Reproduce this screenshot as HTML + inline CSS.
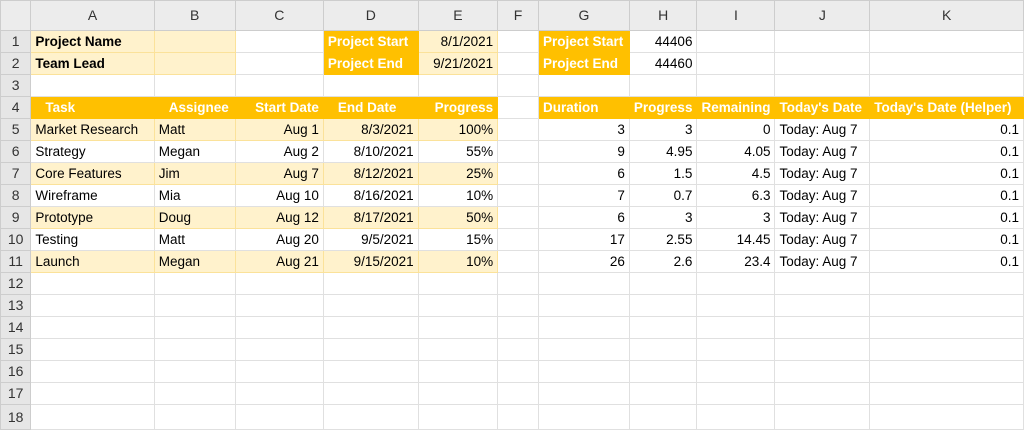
<!DOCTYPE html>
<html><head><meta charset="utf-8"><style>
html,body{margin:0;padding:0;background:#fff;width:1024px;height:430px;overflow:hidden}
table{border-collapse:collapse;table-layout:fixed;font-family:"Liberation Sans",sans-serif;font-size:13.5px;color:#000}
td{height:21px;padding:0 4px;border:1px solid #e0e0e0;white-space:nowrap;overflow:hidden;line-height:21px}
tr.h td{height:29px;background:#ececec;text-align:center;color:#333;font-size:14px;border-color:#cdcdcd}
td.rh{background:#e6e6e6;text-align:center;color:#333;font-size:14px;border-color:#cdcdcd;padding:0}
.y{background:#fff2cc;border-color:#fbe29a}
.o{background:#ffc000;color:#fff;font-weight:bold;border-color:#ffc000}
.b{font-weight:bold}
.r{text-align:right}
tr.last td{height:24px}
</style></head><body>
<table>
<colgroup><col style="width:31px"><col style="width:124px"><col style="width:81px"><col style="width:89px"><col style="width:95px"><col style="width:80px"><col style="width:42px"><col style="width:91px"><col style="width:64px"><col style="width:78px"><col style="width:95px"><col style="width:154px"></colgroup>
<tr class="h"><td></td><td>A</td><td>B</td><td>C</td><td>D</td><td>E</td><td>F</td><td>G</td><td>H</td><td>I</td><td>J</td><td>K</td></tr>
<tr><td class="rh">1</td><td class="y b">Project Name</td><td class="y"></td><td></td><td class="o">Project Start</td><td class="y r">8/1/2021</td><td></td><td class="o">Project Start</td><td class="r">44406</td><td></td><td></td><td></td></tr>
<tr><td class="rh">2</td><td class="y b">Team Lead</td><td class="y"></td><td></td><td class="o">Project End</td><td class="y r">9/21/2021</td><td></td><td class="o">Project End</td><td class="r">44460</td><td></td><td></td><td></td></tr>
<tr><td class="rh">3</td><td></td><td></td><td></td><td></td><td></td><td></td><td></td><td></td><td></td><td></td><td></td></tr>
<tr><td class="rh">4</td><td class="o" style="padding-left:14px">Task</td><td class="o" style="padding-left:14px">Assignee</td><td class="o r">Start Date</td><td class="o" style="padding-left:14px">End Date</td><td class="o r">Progress</td><td></td><td class="o">Duration</td><td class="o r">Progress</td><td class="o r">Remaining</td><td class="o">Today's Date</td><td class="o">Today's Date (Helper)</td></tr>
<tr><td class="rh">5</td><td class="y">Market Research</td><td class="y">Matt</td><td class="y r">Aug 1</td><td class="y r">8/3/2021</td><td class="y r">100%</td><td></td><td class="r">3</td><td class="r">3</td><td class="r">0</td><td>Today: Aug 7</td><td class="r">0.1</td></tr>
<tr><td class="rh">6</td><td>Strategy</td><td>Megan</td><td class="r">Aug 2</td><td class="r">8/10/2021</td><td class="r">55%</td><td></td><td class="r">9</td><td class="r">4.95</td><td class="r">4.05</td><td>Today: Aug 7</td><td class="r">0.1</td></tr>
<tr><td class="rh">7</td><td class="y">Core Features</td><td class="y">Jim</td><td class="y r">Aug 7</td><td class="y r">8/12/2021</td><td class="y r">25%</td><td></td><td class="r">6</td><td class="r">1.5</td><td class="r">4.5</td><td>Today: Aug 7</td><td class="r">0.1</td></tr>
<tr><td class="rh">8</td><td>Wireframe</td><td>Mia</td><td class="r">Aug 10</td><td class="r">8/16/2021</td><td class="r">10%</td><td></td><td class="r">7</td><td class="r">0.7</td><td class="r">6.3</td><td>Today: Aug 7</td><td class="r">0.1</td></tr>
<tr><td class="rh">9</td><td class="y">Prototype</td><td class="y">Doug</td><td class="y r">Aug 12</td><td class="y r">8/17/2021</td><td class="y r">50%</td><td></td><td class="r">6</td><td class="r">3</td><td class="r">3</td><td>Today: Aug 7</td><td class="r">0.1</td></tr>
<tr><td class="rh">10</td><td>Testing</td><td>Matt</td><td class="r">Aug 20</td><td class="r">9/5/2021</td><td class="r">15%</td><td></td><td class="r">17</td><td class="r">2.55</td><td class="r">14.45</td><td>Today: Aug 7</td><td class="r">0.1</td></tr>
<tr><td class="rh">11</td><td class="y">Launch</td><td class="y">Megan</td><td class="y r">Aug 21</td><td class="y r">9/15/2021</td><td class="y r">10%</td><td></td><td class="r">26</td><td class="r">2.6</td><td class="r">23.4</td><td>Today: Aug 7</td><td class="r">0.1</td></tr>
<tr><td class="rh">12</td><td></td><td></td><td></td><td></td><td></td><td></td><td></td><td></td><td></td><td></td><td></td></tr>
<tr><td class="rh">13</td><td></td><td></td><td></td><td></td><td></td><td></td><td></td><td></td><td></td><td></td><td></td></tr>
<tr><td class="rh">14</td><td></td><td></td><td></td><td></td><td></td><td></td><td></td><td></td><td></td><td></td><td></td></tr>
<tr><td class="rh">15</td><td></td><td></td><td></td><td></td><td></td><td></td><td></td><td></td><td></td><td></td><td></td></tr>
<tr><td class="rh">16</td><td></td><td></td><td></td><td></td><td></td><td></td><td></td><td></td><td></td><td></td><td></td></tr>
<tr><td class="rh">17</td><td></td><td></td><td></td><td></td><td></td><td></td><td></td><td></td><td></td><td></td><td></td></tr>
<tr class="last"><td class="rh">18</td><td></td><td></td><td></td><td></td><td></td><td></td><td></td><td></td><td></td><td></td><td></td></tr>
</table>
</body></html>
